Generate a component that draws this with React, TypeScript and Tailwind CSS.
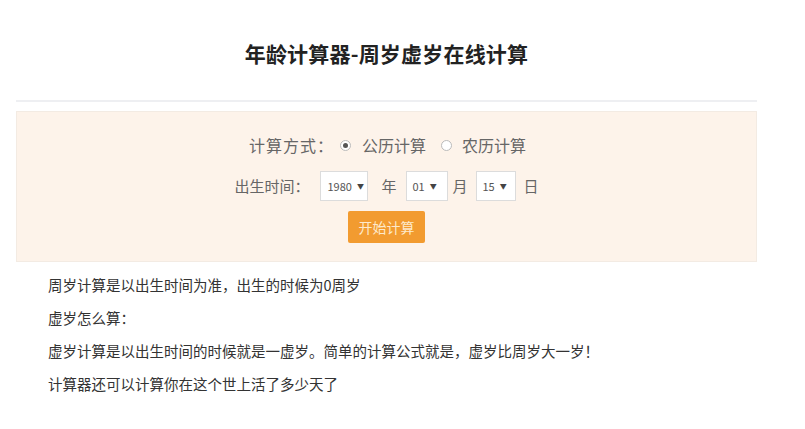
import React from "react";

const cjk = { fontFamily: '"Noto Sans CJK SC", "Liberation Sans", sans-serif' };

function Select({ value, w }: { value: string; w: string }) {
  return (
    <div className={`${w} h-[30px] flex items-center gap-[5px] px-[6px] bg-white border border-[#dcdcdc] text-[11px] text-[#555]`}>
      <span>{value}</span>
      <span className="text-[7px] text-[#444]">▼</span>
    </div>
  );
}

function Radio({ checked }: { checked?: boolean }) {
  return (
    <span className="w-[11px] h-[11px] rounded-full border border-[#bbb] bg-white flex items-center justify-center">
      {checked && <span className="w-[5px] h-[5px] rounded-full bg-[#555]" />}
    </span>
  );
}

export default function App() {
  return (
    <div className="w-[805px] h-[429px] bg-white overflow-hidden" style={cjk}>
      <div className="w-[741px] ml-4">
        <h1 className="pt-[38px] h-[100px] text-center text-[21px] font-bold text-[#222] tracking-[0.2px]">
          年龄计算器-周岁虚岁在线计算
        </h1>
        <div className="h-[2px] bg-[#eeeff2]" />
        <div className="mt-[9px] h-[151px] bg-[#fdf3ea] border border-[#f3ebe3] flex flex-col items-center pt-[19px]">
          <div className="flex items-center text-[16px] text-[#666] h-[28px] ml-[2px]">
            <span className="tracking-[1px]">计算方式：</span>
            <span className="ml-[6px]"><Radio checked /></span>
            <span className="ml-[11px]">公历计算</span>
            <span className="ml-[15px]"><Radio /></span>
            <span className="ml-[10px]">农历计算</span>
          </div>
          <div className="mt-[12px] flex items-center text-[15px] text-[#666]">
            <span>出生时间：</span>
            <span className="ml-[11px]"><Select value="1980" w="w-[48px]" /></span>
            <span className="ml-[13px]">年</span>
            <span className="ml-[9px]"><Select value="01" w="w-[42px]" /></span>
            <span className="ml-[5px]">月</span>
            <span className="ml-[8px]"><Select value="15" w="w-[40px]" /></span>
            <span className="ml-[8px]">日</span>
          </div>
          <div className="mt-[10px] w-[77px] h-[32px] bg-[#f29b30] rounded-[2px] flex items-center justify-center text-[14px] text-[#fde9cc]">
            开始计算
          </div>
        </div>
      </div>
      <div className="pl-[48px] pt-[13px] text-[14.5px] text-[#333] leading-[20px] flex flex-col gap-[13px]">
        <p>周岁计算是以出生时间为准，出生的时候为0周岁</p>
        <p>虚岁怎么算：</p>
        <p>虚岁计算是以出生时间的时候就是一虚岁。简单的计算公式就是，虚岁比周岁大一岁！</p>
        <p>计算器还可以计算你在这个世上活了多少天了</p>
      </div>
    </div>
  );
}
